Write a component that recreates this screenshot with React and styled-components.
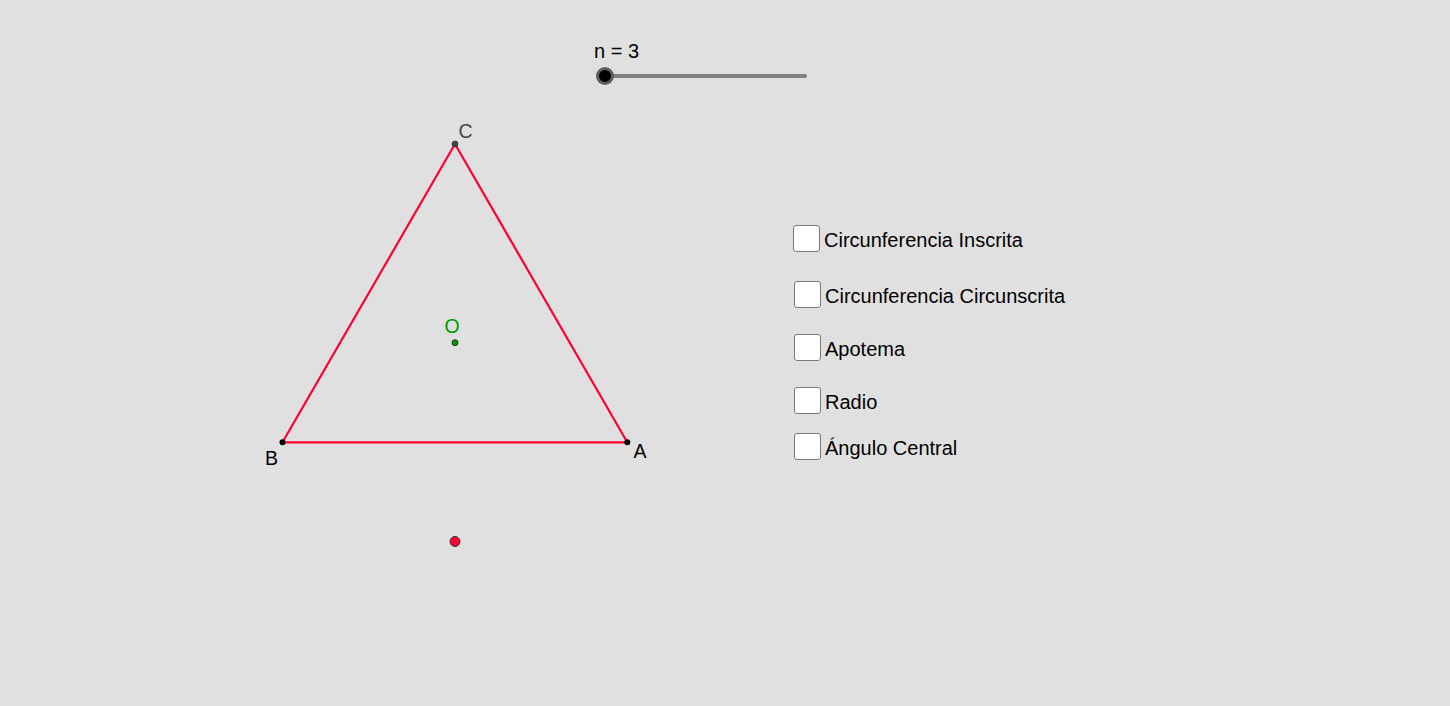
import React from "react";
import styled, { createGlobalStyle } from "styled-components";

const Global = createGlobalStyle`
  html, body { margin: 0; padding: 0; background: #e0e0e0; }
  body { font-family: "Liberation Sans", Arial, sans-serif; overflow: hidden; }
`;

const Canvas = styled.div`
  position: relative;
  width: 1450px;
  height: 706px;
  background: #e0e0e0;
  overflow: hidden;
`;

const Drawing = styled.svg`
  position: absolute;
  left: 0;
  top: 0;
  width: 1450px;
  height: 706px;
`;

const SliderBox = styled.div`
  position: absolute;
  left: 594px;
  top: 40px;
  display: flex;
  flex-direction: column;
`;

const SliderLabel = styled.div`
  font-size: 20px;
  line-height: 23px;
  color: #000;
`;

const Track = styled.div`
  position: relative;
  margin-left: 11px;
  margin-top: 10.5px;
  width: 202px;
  height: 4px;
  border-radius: 2px;
  background: #808080;
`;

const Knob = styled.div`
  position: absolute;
  left: -9px;
  top: -7px;
  width: 12px;
  height: 12px;
  border-radius: 50%;
  background: #000;
  border: 3px solid rgba(110, 110, 110, 0.85);
`;

const CheckRow = styled.label`
  position: absolute;
  left: ${(p) => p.$x}px;
  top: ${(p) => p.$y}px;
  display: flex;
  align-items: flex-start;
  gap: 4px;
  cursor: pointer;
`;

const Box = styled.span`
  box-sizing: border-box;
  width: 27px;
  height: 27px;
  background: #fff;
  border: 1px solid #7a7a7a;
  border-radius: 3px;
  flex: none;
`;

const CheckText = styled.span`
  font-size: 20px;
  line-height: 27px;
  padding-top: 1.5px;
  color: #000;
  white-space: nowrap;
`;

const checks = [
  { label: "Circunferencia Inscrita", x: 793, y: 225 },
  { label: "Circunferencia Circunscrita", x: 794, y: 281 },
  { label: "Apotema", x: 794, y: 334 },
  { label: "Radio", x: 794, y: 387 },
  { label: "Ángulo Central", x: 794, y: 433 },
];

const A = [627.3, 442.3];
const B = [282.5, 442.3];
const C = [455, 144];
const O = [455, 342.7];

export default function App() {
  return (
    <>
      <Global />
      <Canvas>
        <Drawing viewBox="0 0 1450 706">
          <polygon
            points={`${A.join(",")} ${C.join(",")} ${B.join(",")}`}
            fill="none"
            stroke="#ff0033"
            strokeWidth="2.2"
            strokeLinejoin="round"
          />
          <circle cx={A[0]} cy={A[1]} r="3" fill="#000" />
          <circle cx={B[0]} cy={B[1]} r="3" fill="#000" />
          <circle cx={C[0]} cy={C[1]} r="3" fill="#444" stroke="#222" strokeWidth="0.6" />
          <circle cx={O[0]} cy={O[1]} r="3" fill="#009900" stroke="#1a1a1a" strokeWidth="0.8" />
          <circle cx="455" cy="541.5" r="5" fill="#ff0033" stroke="#333" strokeWidth="1" />
          <g fontFamily='"Liberation Sans", Arial, sans-serif' fontSize="19.5">
            <text x="458.5" y="138" fill="#444">C</text>
            <text x="265" y="464.5" fill="#000">B</text>
            <text x="633.5" y="457.5" fill="#000">A</text>
            <text x="444.5" y="332.5" fill="#009900">O</text>
          </g>
        </Drawing>
        <SliderBox>
          <SliderLabel>n = 3</SliderLabel>
          <Track>
            <Knob />
          </Track>
        </SliderBox>
        {checks.map((c) => (
          <CheckRow key={c.label} $x={c.x} $y={c.y}>
            <Box />
            <CheckText>{c.label}</CheckText>
          </CheckRow>
        ))}
      </Canvas>
    </>
  );
}
